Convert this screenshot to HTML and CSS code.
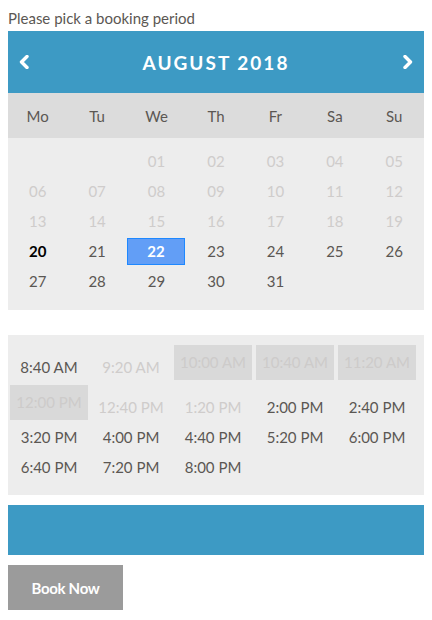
FILE: index.html
```html
<!DOCTYPE html>
<html lang="en">
<head>
  <meta charset="UTF-8">
  <meta name="viewport" content="width=device-width, initial-scale=1.0">
  <title>Booking</title>
  <link rel="stylesheet" href="styles.css">
</head>
<body>
  <p class="pick-label">Please pick a booking period</p>

  <div class="calendar">
    <div class="cal-header">
      <span class="cal-arrow">
        <svg width="12" height="14" viewBox="0 0 12 14"><polyline points="9,1.5 3.5,7 9,12.5" fill="none" stroke="#fff" stroke-width="3.4" stroke-linecap="round" stroke-linejoin="round"/></svg>
      </span>
      <span class="cal-title">AUGUST 2018</span>
      <span class="cal-arrow">
        <svg width="12" height="14" viewBox="0 0 12 14"><polyline points="3,1.5 8.5,7 3,12.5" fill="none" stroke="#fff" stroke-width="3.4" stroke-linecap="round" stroke-linejoin="round"/></svg>
      </span>
    </div>
    <div class="cal-weekdays">
      <span>Mo</span><span>Tu</span><span>We</span><span>Th</span><span>Fr</span><span>Sa</span><span>Su</span>
    </div>
    <div class="cal-days">
      <span></span><span></span>
      <span class="past">01</span><span class="past">02</span><span class="past">03</span><span class="past">04</span><span class="past">05</span>
      <span class="past">06</span><span class="past">07</span><span class="past">08</span><span class="past">09</span><span class="past">10</span><span class="past">11</span><span class="past">12</span>
      <span class="past">13</span><span class="past">14</span><span class="past">15</span><span class="past">16</span><span class="past">17</span><span class="past">18</span><span class="past">19</span>
      <span class="today">20</span><span>21</span><span class="selected">22</span><span>23</span><span>24</span><span>25</span><span>26</span>
      <span>27</span><span>28</span><span>29</span><span>30</span><span>31</span>
    </div>
  </div>

  <div class="slots">
    <span class="slot">8:40 AM</span>
    <span class="slot past">9:20 AM</span>
    <span class="slot booked">10:00 AM</span>
    <span class="slot booked">10:40 AM</span>
    <span class="slot booked">11:20 AM</span>
    <span class="slot booked">12:00 PM</span>
    <span class="slot past">12:40 PM</span>
    <span class="slot past">1:20 PM</span>
    <span class="slot">2:00 PM</span>
    <span class="slot">2:40 PM</span>
    <span class="slot">3:20 PM</span>
    <span class="slot">4:00 PM</span>
    <span class="slot">4:40 PM</span>
    <span class="slot">5:20 PM</span>
    <span class="slot">6:00 PM</span>
    <span class="slot">6:40 PM</span>
    <span class="slot">7:20 PM</span>
    <span class="slot">8:00 PM</span>
  </div>

  <div class="summary-bar"></div>

  <button class="book-btn">Book Now</button>
</body>
</html>
```

FILE: styles.css
```css
body {
  margin: 8px;
  font-family: Lato, "Noto Sans", sans-serif;
  color: #5b5753;
  background: #fff;
}
.pick-label {
  margin: 0;
  font-size: 15px;
  line-height: 21px;
  padding-bottom: 2px;
}
.calendar {
  width: 416px;
}
.cal-header {
  height: 62px;
  background-color: #3d9ac4;
  display: flex;
  align-items: center;
  justify-content: space-between;
  padding: 0 10px;
  box-sizing: border-box;
}
.cal-arrow {
  display: flex;
  width: 12px;
}
.cal-title {
  color: #fff;
  font-weight: bold;
  font-size: 19px;
  letter-spacing: 2px;
}
.cal-weekdays {
  height: 45px;
  background-color: #dcdcdc;
  display: grid;
  grid-template-columns: repeat(7, 1fr);
  align-items: center;
  text-align: center;
  font-size: 15px;
}
.cal-days {
  background-color: #ededed;
  display: grid;
  grid-template-columns: repeat(7, 1fr);
  grid-auto-rows: 30px;
  align-items: center;
  padding: 8px 0 14px;
  text-align: center;
  font-size: 15px;
}
.cal-days span {
  line-height: 27px;
}
.cal-days .past {
  color: #cfcccb;
}
.cal-days .today {
  color: #000;
  font-weight: bold;
}
.cal-days .selected {
  background-color: #629ef6;
  border: 1px solid #1e88ff;
  color: #fff;
  font-weight: bold;
  line-height: 25px;
  margin: 0 1px 0 0;
}
.slots {
  margin-top: 25px;
  width: 416px;
  box-sizing: border-box;
  background-color: #ededed;
  display: grid;
  grid-template-columns: repeat(5, 78px);
  column-gap: 4px;
  row-gap: 5px;
  padding: 10px 2px 15px;
  font-size: 15px;
}
.slot {
  align-self: end;
  line-height: 25px;
  text-align: center;
}
.slot.past {
  color: #cfcccb;
}
.slot.booked {
  align-self: stretch;
  line-height: 35px;
  background-color: #d9d9d9;
  color: #cdcbca;
}
.summary-bar {
  margin-top: 10px;
  width: 416px;
  height: 50px;
  background-color: #3d9ac4;
}
.book-btn {
  display: block;
  margin-top: 10px;
  width: 115px;
  height: 45px;
  border: none;
  background-color: #9b9b9b;
  color: #fff;
  font-family: Lato, "Noto Sans", sans-serif;
  font-weight: bold;
  font-size: 15px;
  letter-spacing: -0.3px;
}
```
